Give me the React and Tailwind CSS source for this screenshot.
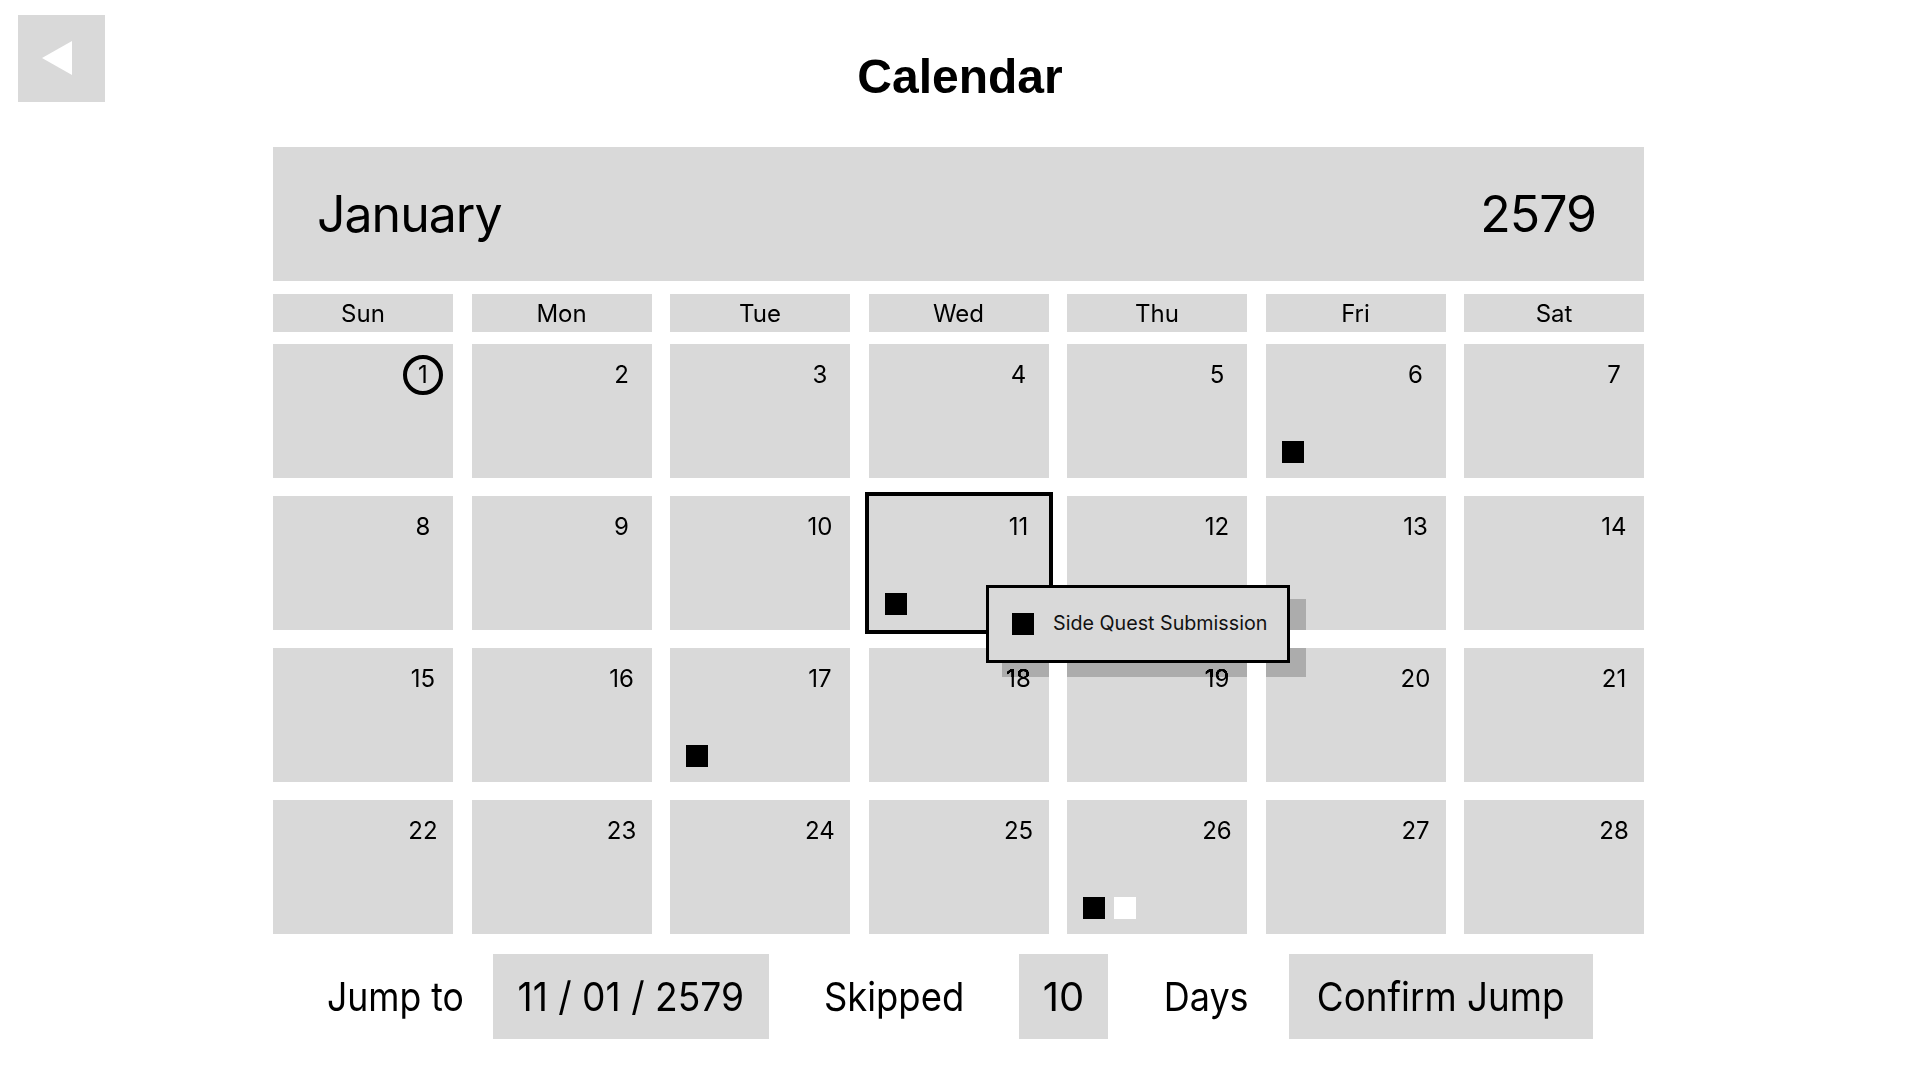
import React from "react";

const DAYS = ["Sun", "Mon", "Tue", "Wed", "Thu", "Fri", "Sat"];
const EVENTS = { 6: ["black"], 11: ["black"], 17: ["black"], 26: ["black", "white"] };

function Cell({ n }) {
  const ev = EVENTS[n] || [];
  const selected = n === 11;
  return (
    <div
      className={
        "h-[134px] bg-[#d9d9d9] flex flex-col justify-between " +
        (selected ? "ring-4 ring-black" : "")
      }
    >
      <div className="flex justify-end pt-[11px] pr-[10px]">
        <div
          className={
            "w-[40px] h-[40px] flex items-center justify-center text-[24px] leading-none text-black " +
            (n === 1 ? "rounded-full border-4 border-black" : "")
          }
        >
          {n}
        </div>
      </div>
      <div className="flex gap-[9px] pl-[16px] pb-[15px] h-[37px] items-end">
        {ev.map((c, i) => (
          <div
            key={i}
            className={"w-[22px] h-[22px] " + (c === "black" ? "bg-black" : "bg-white")}
          />
        ))}
      </div>
    </div>
  );
}

export default function App() {
  const nums = Array.from({ length: 28 }, (_, i) => i + 1);
  return (
    <div
      className="min-h-screen w-[1920px] bg-white text-black"
      style={{ fontFamily: "Inter, 'Noto Sans', sans-serif" }}
    >
      <div className="grid grid-cols-[1fr_auto_1fr] items-start pt-[15px]">
        <div className="pl-[18px]">
          <button className="w-[87px] h-[87px] bg-[#d9d9d9] flex items-center justify-center">
            <svg width="87" height="87" viewBox="0 0 87 87">
              <polygon points="24,43 54,26 54,60" fill="#ffffff" />
            </svg>
          </button>
        </div>
        <h1
          className="mt-[38px] text-[48px] leading-none font-bold"
          style={{ fontFamily: "'Liberation Sans', Arial, sans-serif" }}
        >
          Calendar
        </h1>
        <div />
      </div>

      <div className="ml-[273px] w-[1371px] mt-[45px]">
        <div className="h-[134px] bg-[#d9d9d9] flex items-center justify-between pl-[44px] pr-[48px] text-[50px] leading-none tracking-[-0.02em]">
          <span>January</span>
          <span>2579</span>
        </div>

        <div className="grid grid-cols-7 gap-x-[18.5px] mt-[13px]">
          {DAYS.map((d) => (
            <div
              key={d}
              className="h-[38px] bg-[#d9d9d9] flex items-center justify-center text-[24px] leading-none pt-[1px]"
            >
              {d}
            </div>
          ))}
        </div>

        <div className="relative grid grid-cols-7 gap-x-[18.5px] gap-y-[18px] mt-[12px]">
          {nums.map((n) => (
            <Cell key={n} n={n} />
          ))}
          <div className="absolute left-[729px] top-[255px] w-[304px] h-[78px] bg-[#757575] mix-blend-color-burn" />
          <div className="absolute left-[713px] top-[241px] w-[304px] h-[78px] border-[3px] border-black bg-[#d9d9d9] flex items-center pl-[23px]">
            <div className="w-[22px] h-[22px] bg-black" />
            <span className="ml-[19px] text-[19.7px] leading-none text-[#111] whitespace-nowrap">
              Side Quest Submission
            </span>
          </div>
        </div>

        <div className="flex items-center mt-[20px] h-[85px] text-[40px] leading-none whitespace-nowrap">
          <div className="w-[220px] shrink-0 flex justify-end pr-[29px]">
            <span className="inline-block origin-right scale-x-[0.89]">Jump to</span>
          </div>
          <div className="w-[276px] shrink-0 h-[85px] bg-[#d9d9d9] flex items-center justify-center">
            <span className="inline-block scale-x-[0.93]">11 / 01 / 2579</span>
          </div>
          <div className="w-[250px] shrink-0 flex justify-center">
            <span className="inline-block scale-x-[0.91]">Skipped</span>
          </div>
          <div className="w-[89px] shrink-0 h-[85px] bg-[#d9d9d9] flex items-center justify-center">
            <span className="inline-block">10</span>
          </div>
          <div className="w-[181px] shrink-0 pl-[15px] flex justify-center">
            <span className="inline-block scale-x-[0.9]">Days</span>
          </div>
          <div className="w-[304px] shrink-0 h-[85px] bg-[#d9d9d9] flex items-center justify-center">
            <span className="inline-block scale-x-[0.92]">Confirm Jump</span>
          </div>
        </div>
      </div>
    </div>
  );
}
